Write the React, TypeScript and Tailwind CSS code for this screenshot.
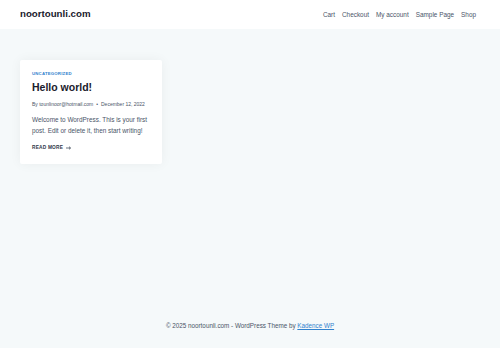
const navItems = ["Cart", "Checkout", "My account", "Sample Page", "Shop"];

const App = () => {
  return (
    <div
      className="w-[500px] h-[348px] bg-[#f5f9fa] flex flex-col text-[#2d3748]"
      style={{ fontFamily: '"Liberation Sans", Arial, sans-serif' }}
    >
      <header className="h-[29px] bg-white flex items-center justify-between pl-[20px] pr-[24px]">
        <p className="text-[9.7px] font-bold text-[#1a202c]">noortounli.com</p>
        <nav className="flex gap-[7px] text-[6.4px] text-[#4a5568]">
          {navItems.map((item) => (
            <span key={item}>{item}</span>
          ))}
        </nav>
      </header>
      <main className="flex-1 px-[20px] pt-[31px]">
        <article className="w-[142px] bg-white rounded-[2px] shadow-[0_0_12px_rgba(0,0,0,0.05)] px-[12px] pt-[11px] pb-[13px]">
          <p className="text-[4.3px] leading-[6px] font-bold text-[#3182ce] tracking-[0.2px]">
            UNCATEGORIZED
          </p>
          <h2 className="mt-[4px] text-[10.5px] leading-[12px] font-bold text-[#1a202c]">
            Hello world!
          </h2>
          <p className="mt-[8px] text-[5px] leading-[6px] text-[#4a5568] flex items-center gap-[3px] whitespace-nowrap">
            <span>By tounlinoor@hotmail.com</span>
            <span>•</span>
            <span>December 12, 2022</span>
          </p>
          <p className="mt-[7px] text-[6.4px] leading-[11px] text-[#4a5568]">
            Welcome to WordPress. This is your first post. Edit or delete it, then start writing!
          </p>
          <p className="mt-[9px] text-[4.8px] leading-[6px] font-bold text-[#2d3748] tracking-[0.2px] flex items-center gap-[3px]">
            <span>READ MORE</span>
            <svg width="5" height="4" viewBox="0 0 5 4" fill="none" stroke="#2d3748" strokeWidth="0.7">
              <path d="M0 2h4.5M3 0.6L4.5 2L3 3.4" />
            </svg>
          </p>
        </article>
      </main>
      <footer className="h-[47px] flex items-start justify-center pt-[20px] text-[6.3px] text-[#4a5568]">
        <p>
          © 2025 noortounli.com - WordPress Theme by{" "}
          <a className="text-[#3182ce] underline">Kadence WP</a>
        </p>
      </footer>
    </div>
  );
};

export default App;
